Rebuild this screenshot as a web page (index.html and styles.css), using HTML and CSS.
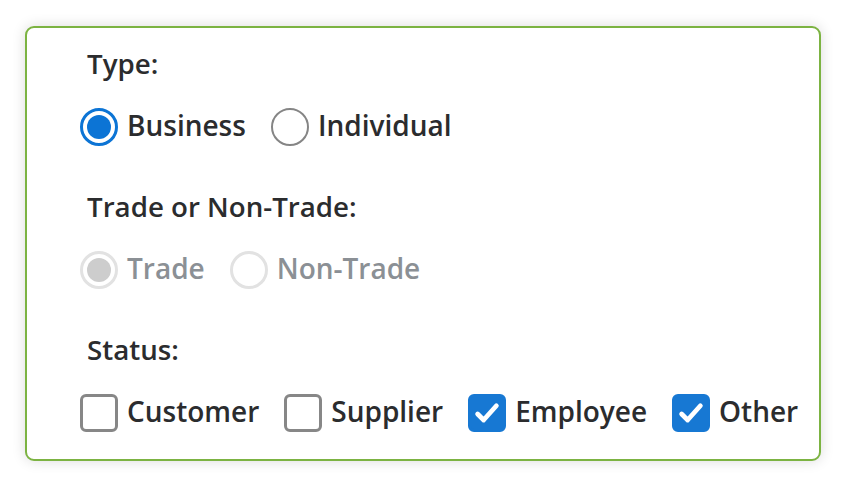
FILE: index.html
```html
<!DOCTYPE html>
<html lang="en">
<head>
  <meta charset="UTF-8">
  <meta name="viewport" content="width=device-width, initial-scale=1.0">
  <title>Contact Type</title>
  <link rel="stylesheet" href="styles.css">
</head>
<body>

  <div class="card">

    <!-- Type -->
    <div class="group">
      <div class="group-title">Type:</div>
      <div class="options">
        <label class="option">
          <span class="radio checked"></span>
          <span class="text">Business</span>
        </label>
        <label class="option">
          <span class="radio"></span>
          <span class="text">Individual</span>
        </label>
      </div>
    </div>

    <!-- Trade or Non-Trade (disabled) -->
    <div class="group">
      <div class="group-title">Trade or Non-Trade:</div>
      <div class="options disabled">
        <label class="option">
          <span class="radio checked"></span>
          <span class="text">Trade</span>
        </label>
        <label class="option">
          <span class="radio"></span>
          <span class="text">Non-Trade</span>
        </label>
      </div>
    </div>

    <!-- Status -->
    <div class="group">
      <div class="group-title">Status:</div>
      <div class="options">
        <label class="option">
          <span class="check"></span>
          <span class="text">Customer</span>
        </label>
        <label class="option">
          <span class="check"></span>
          <span class="text">Supplier</span>
        </label>
        <label class="option">
          <span class="check checked">
            <svg viewBox="0 0 24 24" width="30" height="30"><path d="M4.5 12.8l4.8 4.8 10.2-11.4" fill="none" stroke="#fff" stroke-width="3.8" stroke-linecap="round" stroke-linejoin="round"/></svg>
          </span>
          <span class="text">Employee</span>
        </label>
        <label class="option">
          <span class="check checked">
            <svg viewBox="0 0 24 24" width="30" height="30"><path d="M4.5 12.8l4.8 4.8 10.2-11.4" fill="none" stroke="#fff" stroke-width="3.8" stroke-linecap="round" stroke-linejoin="round"/></svg>
          </span>
          <span class="text">Other</span>
        </label>
      </div>
    </div>

  </div>

</body>
</html>
```

FILE: styles.css
```css
body {
  font-family: "Open Sans", Arial, sans-serif;
  margin: 0;
  padding: 26px 25px 24px;
  background-color: #fff;
  color: #2b2c2e;
}
.card {
  height: 435px;
  box-sizing: border-box;
  padding: 16px 6px 27px 53px;
  border: 2px solid #7cb342;
  border-radius: 9px;
  background-color: #fff;
  box-shadow: 0 0 14px rgba(0, 0, 0, 0.14);
}
.group {
  margin-bottom: 41px;
}
.group:last-child {
  margin-bottom: 0;
}
.group-title {
  font-size: 27.7px;
  font-weight: 600;
  line-height: 38px;
  padding-left: 7px;
  margin-bottom: 26px;
}
.options {
  display: flex;
  gap: 25px;
}
.option {
  display: flex;
  align-items: center;
  gap: 9px;
  height: 38px;
  font-size: 28px;
  font-weight: 600;
}
.text {
  line-height: 38px;
  margin-top: -4px;
}

/* radio buttons */
.radio {
  width: 38px;
  height: 38px;
  box-sizing: border-box;
  border: 2.5px solid #858585;
  border-radius: 50%;
  display: flex;
  align-items: center;
  justify-content: center;
}
.radio.checked {
  border: 3px solid #0c74d5;
}
.radio.checked::after {
  content: "";
  width: 24px;
  height: 24px;
  border-radius: 50%;
  background-color: #0c74d5;
}
.disabled .text {
  color: #8b9095;
}
.disabled .radio {
  border: 3px solid #e2e2e2;
}
.disabled .radio.checked::after {
  background-color: #cdcdcd;
}

/* checkboxes */
.check {
  width: 38px;
  height: 38px;
  box-sizing: border-box;
  border: 3px solid #878787;
  border-radius: 6px;
  display: flex;
  align-items: center;
  justify-content: center;
}
.check.checked {
  border-color: #1778d3;
  background-color: #1778d3;
}
```
